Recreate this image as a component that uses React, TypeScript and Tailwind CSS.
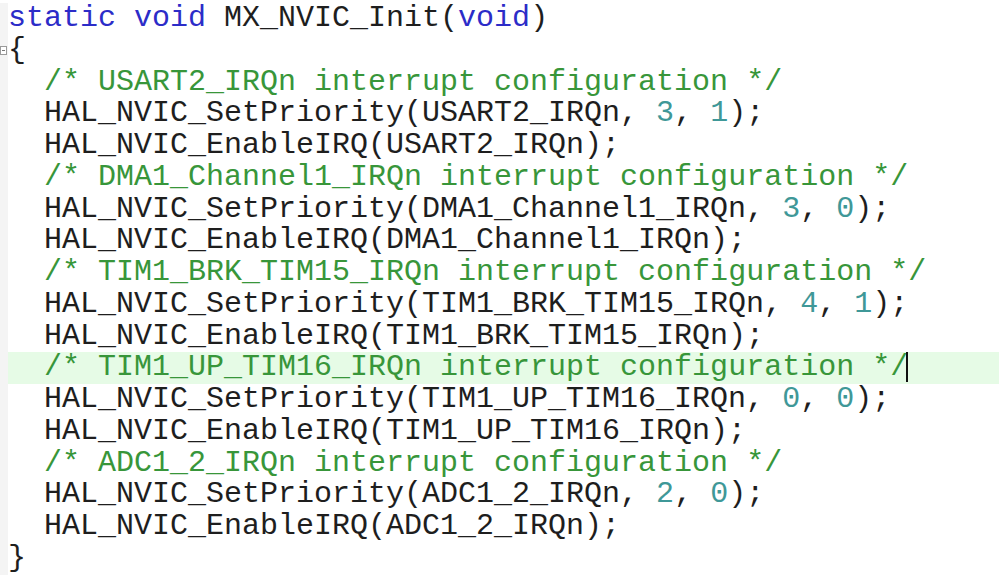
import React from 'react'

type Tok = [string, 'k' | 'c' | 'n' | 't']

const lines: Tok[][] = [
  [['static', 'k'], [' ', 't'], ['void', 'k'], [' MX_NVIC_Init(', 't'], ['void', 'k'], [')', 't']],
  [['{', 't']],
  [['  ', 't'], ['/* USART2_IRQn interrupt configuration */', 'c']],
  [['  HAL_NVIC_SetPriority(USART2_IRQn, ', 't'], ['3', 'n'], [', ', 't'], ['1', 'n'], [');', 't']],
  [['  HAL_NVIC_EnableIRQ(USART2_IRQn);', 't']],
  [['  ', 't'], ['/* DMA1_Channel1_IRQn interrupt configuration */', 'c']],
  [['  HAL_NVIC_SetPriority(DMA1_Channel1_IRQn, ', 't'], ['3', 'n'], [', ', 't'], ['0', 'n'], [');', 't']],
  [['  HAL_NVIC_EnableIRQ(DMA1_Channel1_IRQn);', 't']],
  [['  ', 't'], ['/* TIM1_BRK_TIM15_IRQn interrupt configuration */', 'c']],
  [['  HAL_NVIC_SetPriority(TIM1_BRK_TIM15_IRQn, ', 't'], ['4', 'n'], [', ', 't'], ['1', 'n'], [');', 't']],
  [['  HAL_NVIC_EnableIRQ(TIM1_BRK_TIM15_IRQn);', 't']],
  [['  ', 't'], ['/* TIM1_UP_TIM16_IRQn interrupt configuration */', 'c']],
  [['  HAL_NVIC_SetPriority(TIM1_UP_TIM16_IRQn, ', 't'], ['0', 'n'], [', ', 't'], ['0', 'n'], [');', 't']],
  [['  HAL_NVIC_EnableIRQ(TIM1_UP_TIM16_IRQn);', 't']],
  [['  ', 't'], ['/* ADC1_2_IRQn interrupt configuration */', 'c']],
  [['  HAL_NVIC_SetPriority(ADC1_2_IRQn, ', 't'], ['2', 'n'], [', ', 't'], ['0', 'n'], [');', 't']],
  [['  HAL_NVIC_EnableIRQ(ADC1_2_IRQn);', 't']],
  [['}', 't']],
]

const color = {
  k: 'text-[#2c2cc8]',
  c: 'text-[#38963a]',
  n: 'text-[#3f9898]',
  t: 'text-[#1e1e1e]',
}

const App = () => {
  return (
    <div className="w-[999px] h-[582px] bg-white overflow-hidden">
      <div className="pt-[3px] font-['Courier_New','Liberation_Mono',monospace] text-[30px] leading-[31.75px]">
        {lines.map((line, i) => (
          <div key={i} className="flex">
            <div className="w-[8px] shrink-0 bg-[#f4f4f4] flex items-center">
              {i === 1 && (
                <div className="w-[7px] h-[9px] border border-[#9a9a9a] bg-white flex items-center justify-center">
                  <div className="w-[3px] h-px bg-[#777]" />
                </div>
              )}
            </div>
            <div
              className={
                'flex-1 whitespace-pre ' + (i === 11 ? 'bg-[#e6fbe6]' : '')
              }
            >
              {line.map(([text, kind], j) => (
                <span key={j} className={color[kind]}>
                  {text}
                </span>
              ))}
              {i === 11 && (
                <span className="inline-block w-[2px] h-[30px] bg-[#111] align-middle -ml-[2px]" />
              )}
            </div>
          </div>
        ))}
      </div>
    </div>
  )
}

export default App
